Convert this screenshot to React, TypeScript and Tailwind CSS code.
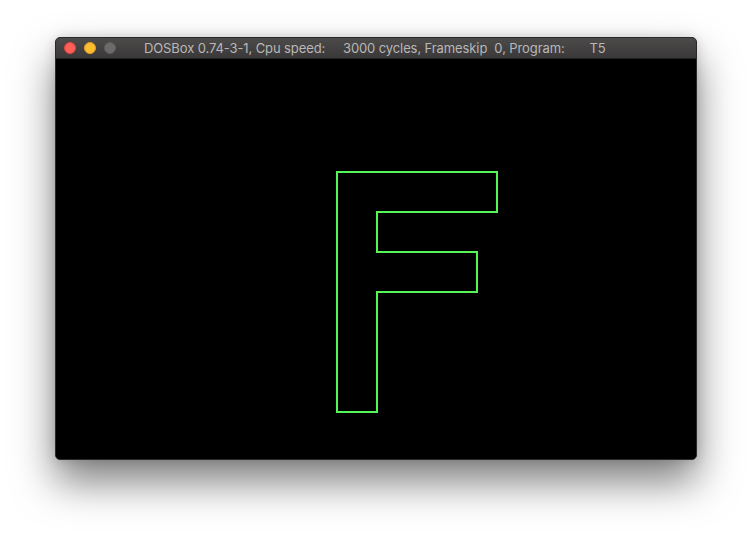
export default function App() {
  return (
    <div className="w-[752px] h-[534px] bg-white overflow-hidden pt-[37px] pl-[55px]">
      <div className="w-[642px] rounded-[5px] border border-[#2a2a2a] bg-black overflow-hidden shadow-[0_22px_40px_rgba(0,0,0,0.5),0_0_12px_rgba(0,0,0,0.15)]">
        <div className="h-[21px] flex items-center bg-gradient-to-b from-[#4d4a4a] to-[#3a3838] border-b border-[#222]">
          <div className="flex items-center gap-[8px] pl-[8px]">
            <div className="w-[12px] h-[12px] rounded-full bg-[#fe5f57] border border-[#e0443e]" />
            <div className="w-[12px] h-[12px] rounded-full bg-[#febc2e] border border-[#dea123]" />
            <div className="w-[12px] h-[12px] rounded-full bg-[#6b6b6b] border border-[#5e5e5e]" />
          </div>
          <div
            className="ml-[28px] whitespace-pre text-[13px] text-[#b8b8b8] leading-none tracking-[-0.1px]"
            style={{ fontFamily: "Inter, 'Liberation Sans', sans-serif" }}
          >
            {"DOSBox 0.74-3-1, Cpu speed:     3000 cycles, Frameskip  0, Program:       T5"}
          </div>
        </div>
        <div className="w-[640px] h-[400px] bg-black">
          <svg width="640" height="400" viewBox="0 0 640 400">
            <polygon
              points="281,113 441,113 441,153 321,153 321,193 421,193 421,233 321,233 321,353 281,353"
              fill="none"
              stroke="#55f455"
              strokeWidth="2"
            />
          </svg>
        </div>
      </div>
    </div>
  );
}
